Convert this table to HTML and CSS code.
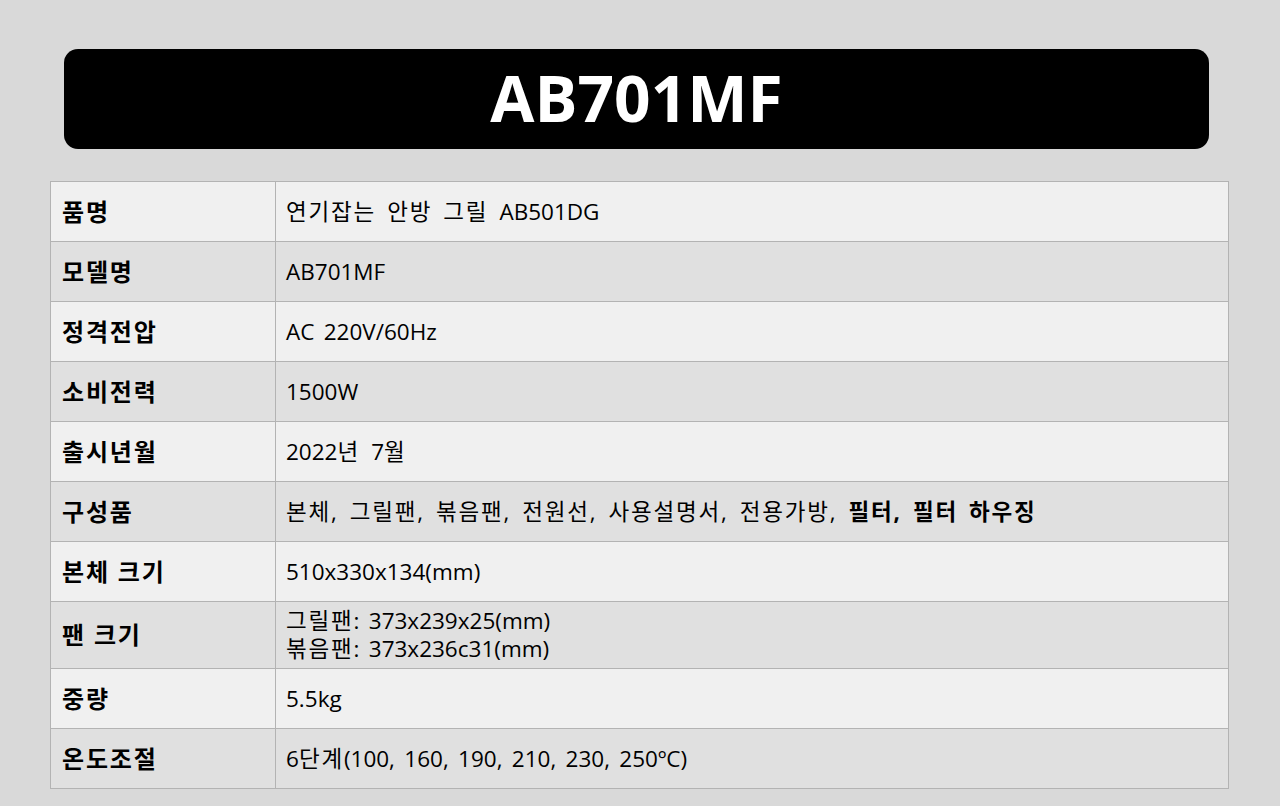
FILE: index.html
```html
<!DOCTYPE html>
<html lang="ko">
<head>
<meta charset="utf-8">
<link rel="stylesheet" href="styles.css">
</head>
<body>
<div class="page">
  <h1 class="title">AB701MF</h1>
  <table class="spec">
    <tr class="odd"><th><span class="k">품명</span></th><td><span class="k">연기잡는 안방 그릴 </span>AB501DG</td></tr>
    <tr class="even"><th><span class="k">모델명</span></th><td>AB701MF</td></tr>
    <tr class="odd"><th><span class="k">정격전압</span></th><td>AC 220V/60Hz</td></tr>
    <tr class="even"><th><span class="k">소비전력</span></th><td>1500W</td></tr>
    <tr class="odd"><th><span class="k">출시년월</span></th><td>2022<span class="k">년 </span>7<span class="k">월</span></td></tr>
    <tr class="even"><th><span class="k">구성품</span></th><td><span class="k">본체, 그릴팬, 볶음팬, 전원선, 사용설명서, 전용가방, </span><b class="k">필터, 필터 하우징</b></td></tr>
    <tr class="odd"><th><span class="k">본체 크기</span></th><td>510x330x134(mm)</td></tr>
    <tr class="even"><th><span class="k">팬 크기</span></th><td class="two"><span class="k">그릴팬</span>: 373x239x25(mm)<br><span class="k">볶음팬</span>: 373x236c31(mm)</td></tr>
    <tr class="odd"><th><span class="k">중량</span></th><td>5.5kg</td></tr>
    <tr class="even"><th><span class="k">온도조절</span></th><td>6<span class="k">단계</span>(100, 160, 190, 210, 230, 250ºC)</td></tr>
  </table>
</div>
</body>
</html>
```

FILE: styles.css
```css
html, body {
  margin: 0;
  padding: 0;
  background: #d9d9d9;
}
body {
  font-family: "Open Sans", "Noto Sans CJK KR", sans-serif;
  color: #000;
}
.page {
  width: 1280px;
  height: 806px;
  padding-top: 49px;
  box-sizing: border-box;
  overflow: hidden;
}
.title {
  margin: 0 71px 0 64px;
  height: 100px;
  background: #000;
  border-radius: 14px;
  color: #fff;
  font-size: 64px;
  font-weight: 700;
  display: flex;
  align-items: center;
  justify-content: center;
  line-height: 1;
  padding-bottom: 2px;
  box-sizing: border-box;
}
.spec {
  margin: 32px 0 0 50px;
  width: 1179px;
  border-collapse: collapse;
  font-size: 22.5px;
}
.spec th, .spec td {
  border: 1px solid #b3b3b3;
  height: 60px;
  padding: 5px 10px;
  line-height: 28px;
  text-align: left;
  vertical-align: middle;
  box-sizing: border-box;
}
.spec th {
  width: 225px;
  font-weight: 700;
  font-size: 24px;
  padding-left: 11px;
}
.spec td {
  font-weight: 400;
  word-spacing: 3.5px;
}
.spec td b {
  font-weight: 700;
}
.k {
  letter-spacing: 1.8px;
}
.spec th .k {
  letter-spacing: 1.8px;
}
.odd { background: #f0f0f0; }
.even { background: #e0e0e0; }
```
